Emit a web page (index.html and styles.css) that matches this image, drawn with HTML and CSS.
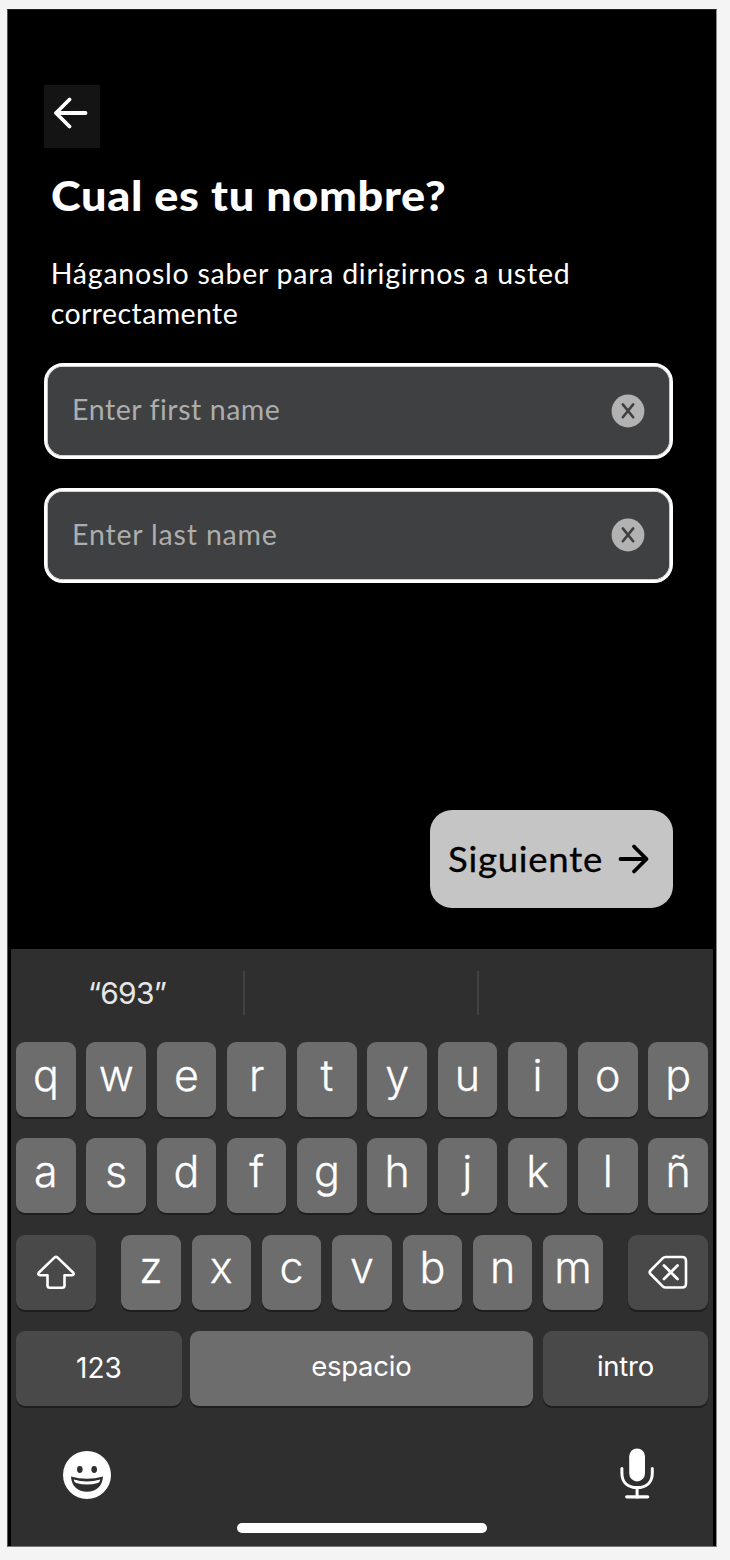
FILE: index.html
```html
<!DOCTYPE html>
<html lang="es">
<head>
<meta charset="utf-8">
<title>Cual es tu nombre?</title>
<link rel="stylesheet" href="styles.css">
</head>
<body>
<main class="phone">
  <section class="form">
    <button class="back" aria-label="Volver">
      <svg width="36" height="32" viewBox="0 0 36 32"><path d="M16.5 2.5 3 16 16.500 29.500M3 16H32.500" fill="none" stroke="#fff" stroke-width="3.800" stroke-linecap="round" stroke-linejoin="round"/></svg>
    </button>
    <h1 class="title"><span class="title-text">Cual es tu nombre?</span></h1>
    <p class="subtitle"><span class="sub-a">Háganoslo saber para dirigirnos a usted</span><br><span class="sub-b">correctamente</span></p>
    <div class="field">
      <span class="placeholder first">Enter first name</span>
      <svg class="clear" viewBox="0 0 34 34"><circle cx="17" cy="17" r="16.400" fill="#b2b2b2"/><path d="M11.800 10.400 22.200 23.200M22.200 10.400 11.800 23.200" stroke="#404042" stroke-width="2.600" stroke-linecap="round"/></svg>
    </div>
    <div class="field">
      <span class="placeholder last">Enter last name</span>
      <svg class="clear" viewBox="0 0 34 34"><circle cx="17" cy="17" r="16.400" fill="#b2b2b2"/><path d="M11.800 10.400 22.200 23.200M22.200 10.400 11.800 23.200" stroke="#404042" stroke-width="2.600" stroke-linecap="round"/></svg>
    </div>
    <button class="next">
      <span class="next-text">Siguiente</span>
      <svg width="32" height="32" viewBox="0 0 32 32"><path d="M16 3.500 28.500 16 16 28.500M28.500 16H2.500" fill="none" stroke="#000" stroke-width="3.800" stroke-linecap="round" stroke-linejoin="round"/></svg>
    </button>
  </section>
  <section class="keyboard">
    <div class="suggestions">
      <div class="suggestion"><span class="guess">“693”</span></div>
      <div class="suggestion"></div>
      <div class="suggestion"></div>
    </div>
    <div class="keys">
      <div class="row letters">
        <div class="key">q</div><div class="key">w</div><div class="key">e</div><div class="key">r</div><div class="key">t</div><div class="key">y</div><div class="key">u</div><div class="key">i</div><div class="key">o</div><div class="key">p</div>
      </div>
      <div class="row letters">
        <div class="key">a</div><div class="key">s</div><div class="key">d</div><div class="key">f</div><div class="key">g</div><div class="key">h</div><div class="key">j</div><div class="key">k</div><div class="key">l</div><div class="key">ñ</div>
      </div>
      <div class="row shift-row">
        <div class="key dark icon"><svg width="40" height="36" viewBox="0 0 40 36"><path d="M18.600 3.400Q20 2.200 21.400 3.400L37.300 18.800Q38.500 21 36 21.200H28.500V31.500Q28.500 33.800 26.200 33.800H13.800Q11.500 33.800 11.500 31.500V21.200H4Q1.500 21 2.700 18.800Z" fill="none" stroke="#fff" stroke-width="2.600" stroke-linejoin="round"/></svg></div>
        <div class="mid">
          <div class="key">z</div><div class="key">x</div><div class="key">c</div><div class="key">v</div><div class="key">b</div><div class="key">n</div><div class="key">m</div>
        </div>
        <div class="key dark icon"><svg width="42" height="36" viewBox="0 0 42 36"><path d="M18.500 3H35Q39 3 39 7V29.500Q39 33.500 35 33.500H18.500Q17 33.500 15.800 32.300L3.500 20Q1.800 18.200 3.500 16.500L15.800 4.200Q17 3 18.500 3Z" fill="none" stroke="#fff" stroke-width="2.600"/><path d="M17 11.500 30.500 25M30.500 11.500 17 25" stroke="#fff" stroke-width="2.800" stroke-linecap="round"/></svg></div>
      </div>
      <div class="row space-row">
        <div class="key dark word digits">123</div>
        <div class="key word"><span class="space-text">espacio</span></div>
        <div class="key dark word"><span class="enter-text">intro</span></div>
      </div>
    </div>
    <div class="dock">
      <svg width="48" height="48" viewBox="0 0 48 48"><circle cx="24" cy="24" r="24" fill="#fff"/><ellipse cx="16.800" cy="18.500" rx="2.800" ry="3.400" fill="#2f2f2f"/><ellipse cx="31.200" cy="18.500" rx="2.800" ry="3.400" fill="#2f2f2f"/><path d="M8 25.500Q24 30 40 25.500C39.500 35.500 33 40.700 24 40.700S8.500 35.500 8 25.500Z" fill="#2f2f2f"/><path d="M10.700 28.500Q24 32.300 37.300 28.500Q37 31 34.800 32Q24 35 13.200 32Q11 31 10.700 28.500Z" fill="#fff"/></svg>
      <svg class="mic" width="36" height="52" viewBox="0 0 36 52"><rect x="10.200" y="1.400" width="15.800" height="33" rx="7.900" fill="#fff"/><path d="M2.900 21.600V26C2.900 35.500 9 40.600 18.100 40.600S33.300 35.500 33.300 26V21.600M18.100 40.600V50" fill="none" stroke="#fff" stroke-width="3" stroke-linecap="round"/><path d="M7.700 49.800H28.700" stroke="#fff" stroke-width="3.200" stroke-linecap="round"/></svg>
    </div>
    <div class="home"></div>
  </section>
</main>
</body>
</html>
```
FILE: styles.css
```css
* { box-sizing: border-box; }
body { margin: 0; padding: 9px 0 0 7px; height: 1560px; background: #f4f4f4; overflow: hidden; }
button { border: 0; padding: 0; font: inherit; color: inherit; }
svg { display: block; flex: none; }

.phone {
  width: 710px; height: 1538px; background: #000; color: #fff;
  border: 1px solid; border-color: #222 #8a8a8a #777 #555;
  display: flex; flex-direction: column;
  font-family: Lato, "Open Sans", sans-serif;
}

.form { height: 939px; padding: 75px 43px 0 35.600px; display: flex; flex-direction: column; }
.back {
  width: 56px; height: 63px; background: #141414; padding: 12px 0 0 9.500px; margin-bottom: 22px;
  flex: none; display: flex; align-items: flex-start;
}
.title { margin: 0 0 33px 7.500px; font-size: 42.500px; line-height: 50px; height: 50px; font-weight: 900; white-space: nowrap; }
.title-text { display: inline-block; letter-spacing: 0.600px; transform: scaleX(1.060); transform-origin: left; }
.subtitle { margin: 0 0 30px 7.200px; font-size: 28.500px; line-height: 40px; height: 80px; white-space: nowrap; }
.sub-a { letter-spacing: 0.760px; }
.sub-b { letter-spacing: 0.4px; }

.field {
  height: 95.500px; flex: none; margin-bottom: 29px; padding: 0 25px 0 25.500px;
  border: 3px solid #fff; border-radius: 19px; background: #3f4041;
  box-shadow: inset 0 0 0 0.700px #fff;
  display: flex; align-items: center; justify-content: space-between;
}
.placeholder { font-size: 28.500px; line-height: 40px; padding-bottom: 3px; color: #adadad; }
.first { letter-spacing: 0.550px; }
.last { letter-spacing: 0.820px; }
.clear { width: 34px; height: 34px; }

.next {
  width: 243.500px; height: 98px; flex: none; margin-top: 198px; align-self: flex-end;
  border-radius: 22px; background: #c5c5c5; color: #000;
  display: flex; align-items: center; justify-content: space-between; padding: 0 23.500px 0 18px;
}
.next-text {
  font-size: 35px; line-height: 44px; padding-bottom: 3px; letter-spacing: 0.700px;
  -webkit-text-stroke: 0.300px #000; transform: scaleX(1.045); transform-origin: left;
}

.keyboard { margin: 0 3px; height: 597px; background: #2f2f2f; font-family: Inter, "Liberation Sans", sans-serif; }
.suggestions { height: 93px; padding-top: 22px; display: grid; grid-template-columns: 234px 234px 1fr; }
.suggestion { height: 44px; border-right: 2px solid #424242; display: flex; align-items: center; justify-content: center; font-size: 30px; color: #e6e6e6; }
.suggestion:last-child { border-right: 0; }
.guess { letter-spacing: -0.800px; }

.keys { padding: 0 5.200px; display: grid; gap: 21.300px; }
.row { display: grid; gap: 10.800px; height: 75px; }
.letters { grid-template-columns: repeat(10, 1fr); }
.shift-row { grid-template-columns: 79.400px 481.700px 79.400px; justify-content: space-between; gap: 0; }
.mid { display: grid; grid-template-columns: repeat(7, 1fr); gap: 10.800px; }
.space-row { grid-template-columns: 165.500px 342.500px 164.500px; gap: 0 8.400px; }
.space-row .key:last-child { margin-left: 2px; width: 165px; }
.key {
  min-width: 0; height: 75px; border-radius: 9px; background: #6d6d6d; box-shadow: 0 2px 0 #1e1e1e;
  display: flex; align-items: center; justify-content: center;
  font-size: 43px; font-weight: 300; line-height: 1; padding-bottom: 9px;
  -webkit-text-stroke: 0.300px #fff;
}
.dark { background: #494949; }
.icon { padding-bottom: 0; }
.word { font-size: 27.500px; font-weight: 400; padding-bottom: 4px; -webkit-text-stroke: 0; }
.space-text, .enter-text { letter-spacing: -0.250px; }
.digits { font-size: 28px; padding-bottom: 0; }

.dock { height: 118px; padding: 45px 58px 0 52px; display: flex; justify-content: space-between; align-items: flex-start; }
.mic { margin-top: -4px; }
.home { width: 250px; height: 10px; border-radius: 5px; background: #fff; margin: -1px auto 0; }
```
